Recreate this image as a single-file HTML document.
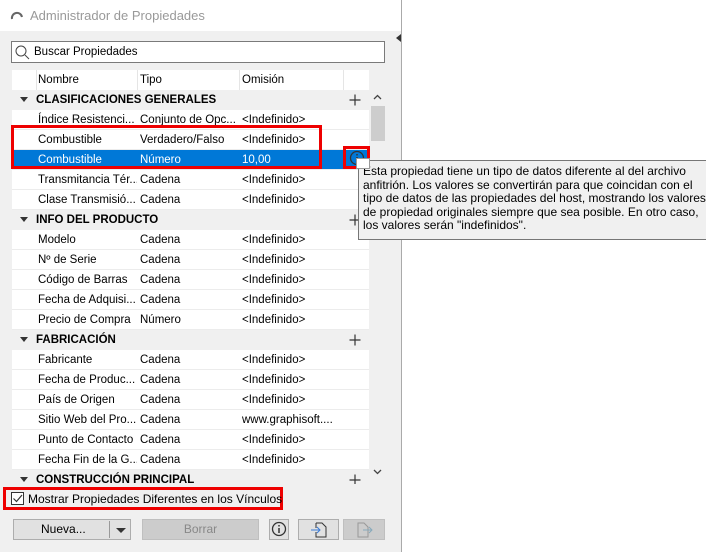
<!DOCTYPE html><html><head><style>
body{margin:0;width:706px;height:552px;background:#fff;font-family:"Liberation Sans",sans-serif;font-size:11.5px;position:relative;overflow:hidden;color:#000}
.a{position:absolute}
#win{left:0;top:0;width:401px;height:552px;background:#f0f0f0;border-right:1px solid #aaa}
.row{position:absolute;left:12px;width:357px;height:20px;line-height:21px;background:#fff;border-bottom:1px solid #ececec;box-sizing:border-box}
.row span{position:absolute;white-space:nowrap;overflow:hidden}
.g{background:#f0f0f0;font-weight:bold;border:none}
.sel{background:#0078d7;color:#fff}
.btn{position:absolute;top:519px;height:21px;border:1px solid #adadad;background:#e1e1e1;box-sizing:border-box;text-align:center;line-height:19px;font-size:12px}
</style></head><body>
<div class="a" id="win"></div>
<div class="a" style="left:0;top:0;width:401px;height:31px;background:#fff"></div>
<svg class="a" style="left:10px;top:9px" width="14" height="12"><path d="M2 10 A5 5 0 0 1 12 8" stroke="#666" stroke-width="2" fill="none"/></svg>
<div class="a" style="left:30px;top:8px;font-size:13px;color:#999">Administrador de Propiedades</div>
<div class="a" style="left:396px;top:34px;width:0;height:0;border-top:4px solid transparent;border-bottom:4px solid transparent;border-right:5px solid #333"></div>
<div class="a" style="left:11px;top:41px;width:374px;height:22px;border:1px solid #7a7a7a;background:#fff;box-sizing:border-box"></div>
<svg class="a" style="left:15px;top:45px" width="15" height="15"><circle cx="6" cy="6" r="5" stroke="#444" fill="none"/><path d="M10 10 L14 14" stroke="#444"/></svg>
<div class="a" style="left:34px;top:46px">Buscar Propiedades</div>
<div class="a" style="left:12px;top:70px;width:357px;height:20px;background:#fff"></div>
<div class="a" style="left:36px;top:70px;width:1px;height:20px;background:#e5e5e5"></div>
<div class="a" style="left:137px;top:70px;width:1px;height:20px;background:#e5e5e5"></div>
<div class="a" style="left:239px;top:70px;width:1px;height:20px;background:#e5e5e5"></div>
<div class="a" style="left:343px;top:70px;width:1px;height:20px;background:#e5e5e5"></div>
<div class="a" style="left:38px;top:74px">Nombre</div><div class="a" style="left:140px;top:74px">Tipo</div><div class="a" style="left:242px;top:74px">Omisión</div>
<div id="rows"></div>
<div class="a" style="left:369px;top:90px;width:17px;height:394px;background:#f0f0f0"></div>
<div class="a" style="left:371px;top:106px;width:14px;height:35px;background:#cdcdcd"></div>
<svg class="a" style="left:373px;top:94px" width="9" height="6"><path d="M1 5 L4.5 1.5 L8 5" stroke="#444" fill="none" stroke-width="1.3"/></svg>
<svg class="a" style="left:373px;top:469px" width="9" height="6"><path d="M1 1 L4.5 4.5 L8 1" stroke="#444" fill="none" stroke-width="1.3"/></svg>
<div class="a" style="left:0;top:484px;width:401px;height:68px;background:#f0f0f0"></div>
<div class="a" style="left:11px;top:125px;width:311px;height:44px;border:3px solid #e00;box-sizing:border-box"></div>
<div class="a" style="left:343px;top:146px;width:27px;height:23px;border:3px solid #e00;box-sizing:border-box"></div>
<svg class="a" style="left:349px;top:150px" width="16" height="16"><circle cx="8" cy="8" r="6.5" stroke="#333" fill="none" stroke-width="1.3"/><path d="M8 7v5M8 4v1.5" stroke="#333" stroke-width="1.5"/></svg>
<div class="a" style="left:358px;top:160px;width:350px;height:80px;background:#f0f0f0;border:1px solid #767676;box-sizing:border-box;padding:4px 0 0 4px;font-size:12px;line-height:13.5px;white-space:nowrap">Esta propiedad tiene un tipo de datos diferente al del archivo<br>anfitrión. Los valores se convertirán para que coincidan con el<br>tipo de datos de las propiedades del host, mostrando los valores<br>de propiedad originales siempre que sea posible. En otro caso,<br>los valores serán "indefinidos".</div>
<div class="a" style="left:356px;top:158px;width:12px;height:9px;background:#fff;border:1px solid #999"></div>
<div class="a" style="left:3px;top:487px;width:280px;height:23px;border:3px solid #e00;box-sizing:border-box"></div>
<div class="a" style="left:11px;top:492px;width:13px;height:13px;border:1px solid #333;background:#fff;box-sizing:border-box"></div>
<svg class="a" style="left:12px;top:493px" width="11" height="11"><path d="M1.5 5.5 L4.5 8.5 L10 2" stroke="#333" fill="none" stroke-width="1.2"/></svg>
<div class="a" style="left:28px;top:492px;font-size:12px">Mostrar Propiedades Diferentes en los Vínculos</div>
<div class="btn" style="left:13px;width:118px"><span style="position:absolute;left:27px">Nueva...</span><span style="position:absolute;left:95px;top:0;width:1px;height:17px;margin-top:1px;background:#999"></span><span style="position:absolute;left:102px;top:8px;border-left:5px solid transparent;border-right:5px solid transparent;border-top:5px solid #333"></span></div>
<div class="btn" style="left:142px;width:117px;background:#ccc;border-color:#bfbfbf;color:#888">Borrar</div>
<div class="btn" style="left:269px;width:20px"><svg width="16" height="16" style="margin-top:1px"><circle cx="8" cy="8" r="6.5" stroke="#333" fill="none" stroke-width="1.3"/><path d="M8 7v5M8 4v1.5" stroke="#333" stroke-width="1.5"/></svg></div>
<div class="btn" style="left:298px;width:41px"><svg width="18" height="17" style="margin-top:1px"><path d="M6 2h6l4 4v10H6V11M6 7V2" stroke="#333" fill="none"/><path d="M1 9h9M7 6l3 3-3 3" stroke="#3a7bd5" fill="none"/></svg></div>
<div class="btn" style="left:343px;width:42px;background:#ccc;border-color:#bfbfbf"><svg width="18" height="17" style="margin-top:1px"><path d="M3 2h6l4 4v10H3z" stroke="#999" fill="none"/><path d="M8 9h9M14 6l3 3-3 3" stroke="#8ab" fill="none"/></svg></div>
<script>
var d=[["g","CLASIFICACIONES GENERALES"],["Índice Resistenci...","Conjunto de Opc...","<Indefinido>"],["Combustible","Verdadero/Falso","<Indefinido>"],["s","Combustible","Número","10,00"],["Transmitancia Tér...","Cadena","<Indefinido>"],["Clase Transmisió...","Cadena","<Indefinido>"],["g","INFO DEL PRODUCTO"],["Modelo","Cadena","<Indefinido>"],["Nº de Serie","Cadena","<Indefinido>"],["Código de Barras","Cadena","<Indefinido>"],["Fecha de Adquisi...","Cadena","<Indefinido>"],["Precio de Compra","Número","<Indefinido>"],["g","FABRICACIÓN"],["Fabricante","Cadena","<Indefinido>"],["Fecha de Produc...","Cadena","<Indefinido>"],["País de Origen","Cadena","<Indefinido>"],["Sitio Web del Pro...","Cadena","www.graphisoft...."],["Punto de Contacto","Cadena","<Indefinido>"],["Fecha Fin de la G...","Cadena","<Indefinido>"],["g","CONSTRUCCIÓN PRINCIPAL"]];
var h="",e=function(s){return s.replace(/</g,"&lt;").replace(/>/g,"&gt;")};
var plus='<svg style="position:absolute;left:337px;top:4px" width="12" height="12"><path d="M6 0.5v11M0.5 6h11" stroke="#333" stroke-width="1.2"/></svg>';
d.forEach(function(r,i){var t=90+i*20;
if(r[0]=="g"){h+='<div class="row g" style="top:'+t+'px"><span style="left:8px;top:7px;width:0;height:0;border-left:4px solid transparent;border-right:4px solid transparent;border-top:5px solid #333"></span><span style="left:24px">'+r[1]+'</span>'+plus+'</div>';}
else{var c="row",o=0;if(r[0]=="s"){c+=" sel";o=1;}
h+='<div class="'+c+'" style="top:'+t+'px"><span style="left:26px;width:99px">'+e(r[o])+'</span><span style="left:128px;width:99px">'+e(r[o+1])+'</span><span style="left:230px;width:110px">'+e(r[o+2])+'</span></div>';}});
document.getElementById("rows").innerHTML=h;
</script>
</body></html>
